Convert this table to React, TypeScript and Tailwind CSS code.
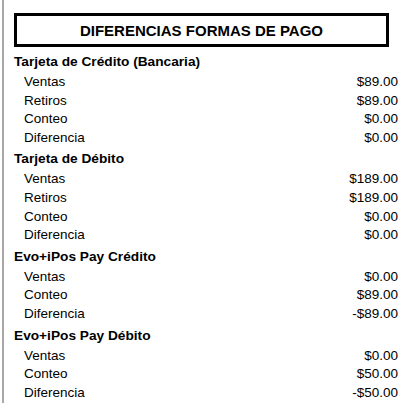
import React from "react";

type Row = { label: string; value: string };
type Section = { title: string; rows: Row[] };

const sections: Section[] = [
  {
    title: "Tarjeta de Crédito (Bancaria)",
    rows: [
      { label: "Ventas", value: "$89.00" },
      { label: "Retiros", value: "$89.00" },
      { label: "Conteo", value: "$0.00" },
      { label: "Diferencia", value: "$0.00" },
    ],
  },
  {
    title: "Tarjeta de Débito",
    rows: [
      { label: "Ventas", value: "$189.00" },
      { label: "Retiros", value: "$189.00" },
      { label: "Conteo", value: "$0.00" },
      { label: "Diferencia", value: "$0.00" },
    ],
  },
  {
    title: "Evo+iPos Pay Crédito",
    rows: [
      { label: "Ventas", value: "$0.00" },
      { label: "Conteo", value: "$89.00" },
      { label: "Diferencia", value: "-$89.00" },
    ],
  },
  {
    title: "Evo+iPos Pay Débito",
    rows: [
      { label: "Ventas", value: "$0.00" },
      { label: "Conteo", value: "$50.00" },
      { label: "Diferencia", value: "-$50.00" },
    ],
  },
];

export default function App() {
  return (
    <div
      className="w-[417px] h-[403px] overflow-hidden bg-white text-black"
      style={{ fontFamily: '"Liberation Sans", Arial, sans-serif' }}
    >
      <div className="ml-[2px] h-full border-l-2 border-[#a8a8a8] pl-[10px] pr-[19px] pt-[13px]">
        <div className="w-[375px] h-[34px] border-[3px] border-black flex items-center justify-center">
          <span className="text-[15px] font-bold leading-none">DIFERENCIAS FORMAS DE PAGO</span>
        </div>
        <div className="mt-[4px]">
          {sections.map((s) => (
            <div key={s.title} className="mb-[1px]">
              <div className="text-[13.7px] font-bold leading-[20px] pt-[1px]">{s.title}</div>
              <div className="pl-[10px] pt-[1px]">
                {s.rows.map((r) => (
                  <div key={r.label} className="flex justify-between text-[13.5px] leading-[18.6px]">
                    <span>{r.label}</span>
                    <span>{r.value}</span>
                  </div>
                ))}
              </div>
            </div>
          ))}
        </div>
      </div>
    </div>
  );
}
